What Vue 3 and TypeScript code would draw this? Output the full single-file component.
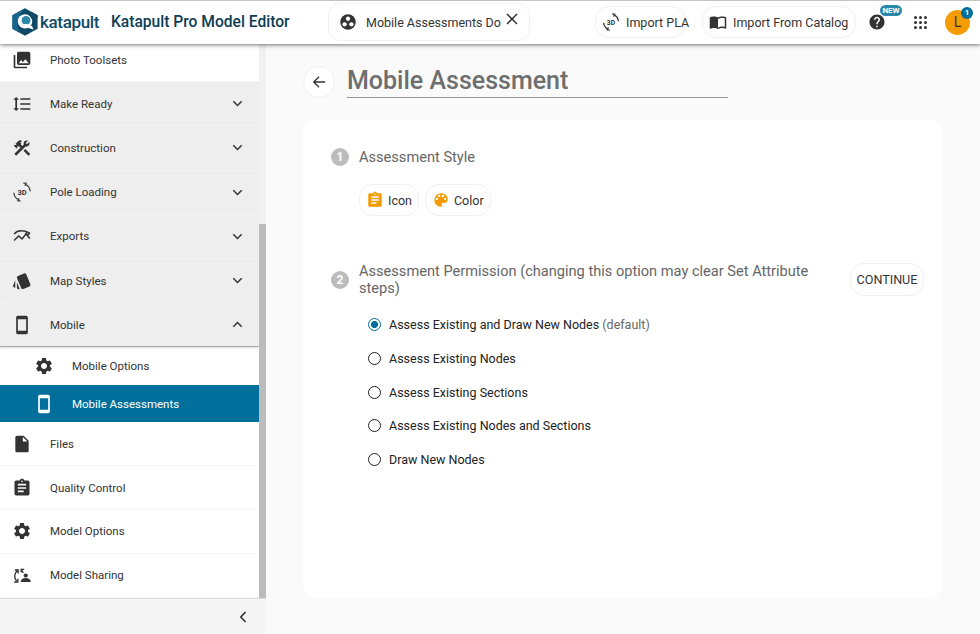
<script setup lang="ts">
import { ref } from 'vue';

interface NavItem {
  label: string;
  icon: string;
  shaded?: boolean;
  chevron?: 'down' | 'up';
  sub?: boolean;
  active?: boolean;
  short?: boolean;
}

const icons: Record<string, string> = {
  photos:
    'M22 16V4c0-1.1-.9-2-2-2H8c-1.1 0-2 .9-2 2v12c0 1.1.9 2 2 2h12c1.1 0 2-.9 2-2zm-11-4l2.03 2.71L16 11l4 5H8l3-4zM2 6v14c0 1.1.9 2 2 2h14v-2H4V6H2z',
  spacing:
    'M6 7h2.5L5 3.5 1.5 7H4v10H1.5L5 20.5 8.5 17H6V7zm4-2v2h12V5H10zm0 14h12v-2H10v2zm0-6h12v-2H10v2z',
  tools:
    'M13.78 15.3l6 6 2.11-2.16-6-6zM17.5 10c1.93 0 3.5-1.57 3.5-3.5 0-.58-.16-1.12-.41-1.6l-2.7 2.7-1.49-1.49 2.7-2.7c-.48-.25-1.02-.41-1.6-.41C15.57 3 14 4.57 14 6.5c0 .41.08.8.21 1.16l-1.85 1.85-1.78-1.78.71-.71-1.41-1.41L12 3.49c-1.17-1.17-3.07-1.17-4.24 0L4.22 7.03l1.41 1.41H2.81l-.71.71 3.54 3.54.71-.71V9.15l1.41 1.41.71-.71 1.78 1.78-7.41 7.41 2.12 2.12L16.34 10.21c.36.13.75.21 1.16.21z',
  style:
    'M2.53 19.65l1.34.56v-9.03l-2.43 5.86c-.41 1.02.08 2.19 1.09 2.61zm19.5-3.7L17.07 3.98c-.31-.75-1.04-1.21-1.81-1.23-.26 0-.53.04-.79.15L7.1 5.95c-.75.31-1.21 1.03-1.23 1.8-.01.27.04.54.15.8l4.96 11.97c.31.76 1.05 1.22 1.83 1.23.26 0 .52-.05.77-.15l7.36-3.05c1.02-.42 1.51-1.59 1.09-2.6zM5.88 19.75c0 1.1.9 2 2 2h1.45l-3.45-8.34v6.34z',
  phone:
    'M17 1.01L7 1c-1.1 0-2 .9-2 2v18c0 1.1.9 2 2 2h10c1.1 0 2-.9 2-2V3c0-1.1-.9-1.99-2-1.99zM17 19H7V5h10v14z',
  gear:
    'M19.14 12.94c.04-.3.06-.61.06-.94 0-.32-.02-.64-.07-.94l2.03-1.58c.18-.14.23-.41.12-.61l-1.92-3.32c-.12-.22-.37-.29-.59-.22l-2.39.96c-.5-.38-1.03-.7-1.62-.94l-.36-2.54c-.04-.24-.24-.41-.48-.41h-3.84c-.24 0-.43.17-.47.41l-.36 2.54c-.59.24-1.13.57-1.62.94l-2.39-.96c-.22-.08-.47 0-.59.22L2.74 8.87c-.12.21-.08.47.12.61l2.03 1.58c-.05.3-.09.63-.09.94s.02.64.07.94l-2.03 1.58c-.18.14-.23.41-.12.61l1.92 3.32c.12.22.37.29.59.22l2.39-.96c.5.38 1.03.7 1.62.94l.36 2.54c.05.24.24.41.48.41h3.84c.24 0 .44-.17.47-.41l.36-2.54c.59-.24 1.13-.56 1.62-.94l2.39.96c.22.08.47 0 .59-.22l1.92-3.32c.12-.22.07-.47-.12-.61l-2.01-1.58zM12 15.6c-1.98 0-3.6-1.62-3.6-3.6s1.62-3.6 3.6-3.6 3.6 1.62 3.6 3.6-1.62 3.6-3.6 3.6z',
  file: 'M6 2c-1.1 0-1.99.9-1.99 2L4 20c0 1.1.89 2 1.99 2H18c1.1 0 2-.9 2-2V8l-6-6H6zm7 7V3.5L18.5 9H13z',
  clipboard:
    'M19 3h-4.18C14.4 1.84 13.3 1 12 1c-1.3 0-2.4.84-2.82 2H5c-1.1 0-2 .9-2 2v14c0 1.1.9 2 2 2h14c1.1 0 2-.9 2-2V5c0-1.1-.9-2-2-2zm-7 0c.55 0 1 .45 1 1s-.45 1-1 1-1-.45-1-1 .45-1 1-1zm2 14H7v-2h7v2zm3-4H7v-2h10v2zm0-4H7V7h10v2z',
  palette:
    'M12 3a9 9 0 0 0 0 18c.83 0 1.5-.67 1.5-1.5 0-.39-.15-.74-.39-1.01-.23-.26-.38-.61-.38-.99 0-.83.67-1.5 1.5-1.5H16c2.76 0 5-2.24 5-5 0-4.42-4.03-8-9-8zm-5.5 9c-.83 0-1.5-.67-1.5-1.5S5.67 9 6.5 9 8 9.67 8 10.5 7.33 12 6.5 12zm3-4C8.67 8 8 7.33 8 6.5S8.67 5 9.5 5s1.5.67 1.5 1.5S10.33 8 9.5 8zm5 0c-.83 0-1.5-.67-1.5-1.5S13.67 5 14.5 5s1.5.67 1.5 1.5S15.33 8 14.5 8zm3 4c-.83 0-1.5-.67-1.5-1.5S16.67 9 17.5 9s1.5.67 1.5 1.5-.67 1.5-1.5 1.5z',
  help: 'M12 2C6.48 2 2 6.48 2 12s4.48 10 10 10 10-4.48 10-10S17.52 2 12 2zm1 17h-2v-2h2v2zm2.07-7.75l-.9.92C13.45 12.9 13 13.5 13 15h-2v-.5c0-1.1.45-2.1 1.17-2.83l1.24-1.26c.37-.36.59-.86.59-1.41 0-1.1-.9-2-2-2s-2 .9-2 2H8c0-2.21 1.79-4 4-4s4 1.79 4 4c0 .88-.36 1.68-.93 2.25z',
  book: 'M21 5c-1.11-.35-2.33-.5-3.5-.5-1.95 0-4.05.4-5.5 1.5-1.45-1.1-3.55-1.5-5.5-1.5S2.45 4.9 1 6v14.65c0 .25.25.5.5.5.1 0 .15-.05.25-.05C3.1 20.45 5.05 20 6.5 20c1.95 0 4.05.4 5.5 1.5 1.35-.85 3.8-1.5 5.5-1.5 1.65 0 3.35.3 4.75 1.05.1.05.15.05.25.05.25 0 .5-.25.5-.5V6c-.6-.45-1.25-.75-2-1zm0 13.5c-1.1-.35-2.3-.5-3.5-.5-1.7 0-4.15.65-5.5 1.5V8c1.35-.85 3.8-1.5 5.5-1.5 1.2 0 2.4.15 3.5.5v11.5z',
};

const navItems: NavItem[] = [
  { label: 'Photo Toolsets', icon: 'photos' },
  { label: 'Make Ready', icon: 'spacing', shaded: true, chevron: 'down' },
  { label: 'Construction', icon: 'tools', shaded: true, chevron: 'down' },
  { label: 'Pole Loading', icon: 'rotate3d', shaded: true, chevron: 'down' },
  { label: 'Exports', icon: 'exports', shaded: true, chevron: 'down' },
  { label: 'Map Styles', icon: 'style', shaded: true, chevron: 'down' },
  { label: 'Mobile', icon: 'phone', shaded: true, chevron: 'up' },
  { label: 'Mobile Options', icon: 'gear', sub: true },
  { label: 'Mobile Assessments', icon: 'phone', sub: true, active: true },
  { label: 'Files', icon: 'file', short: true },
  { label: 'Quality Control', icon: 'clipboard', short: true },
  { label: 'Model Options', icon: 'gear', short: true },
  { label: 'Model Sharing', icon: 'sharing', short: true },
];

const permissions = [
  'Assess Existing and Draw New Nodes',
  'Assess Existing Nodes',
  'Assess Existing Sections',
  'Assess Existing Nodes and Sections',
  'Draw New Nodes',
];

const selected = ref(0);
</script>

<template>
  <div class="app">
    <header class="topbar">
      <div class="brand">
        <svg class="logo" viewBox="0 0 26 28">
          <path d="M13 0.3 25.6 7.2V20.8L13 27.7 0.4 20.8V7.2Z" fill="#0e4a66" />
          <path d="M13 0.3 0.4 7.2V20.8L7 24.4 5 14 8 7Z" fill="#14688c" />
          <circle cx="13" cy="13.4" r="7.2" fill="#fff" />
          <circle cx="14" cy="12.4" r="4.4" fill="#2b88a8" />
          <path d="M8 17.6 21.6 21.6 20 18 13.5 15.8Z" fill="#fff" />
          <path d="M17.6 7.6 21 13 25.6 10V7.2L19 3.6Z" fill="#0e4a66" />
        </svg>
        <span class="wordmark">katapult</span>
      </div>
      <h1 class="app-title">Katapult Pro Model Editor</h1>

      <div class="tab-chip">
        <svg class="tab-icon" viewBox="0 0 20 20">
          <circle cx="10" cy="10" r="8.6" fill="#333" />
          <circle cx="10" cy="6.4" r="2.4" fill="#fff" />
          <circle cx="6.2" cy="12.6" r="2.4" fill="#fff" />
          <circle cx="13.8" cy="12.6" r="2.4" fill="#fff" />
        </svg>
        <span class="tab-text">Mobile Assessments Do</span>
        <svg class="tab-close" viewBox="0 0 12 12">
          <path d="M1 1 11 11M11 1 1 11" stroke="#222" stroke-width="1.3" fill="none" />
        </svg>
      </div>

      <button class="top-btn pla-btn">
        <svg class="top-btn-icon" viewBox="0 0 24 24">
          <path d="M2.2 13A10 10 0 0 0 8 21.4M8.6 19.4 7 22.4 10.5 22.8M21.8 11A10 10 0 0 0 16 2.6M15.4 4.6 17 1.6 13.5 1.2" fill="none" stroke="#333" stroke-width="1.7" />
          <text x="12" y="15.6" text-anchor="middle" class="svg-3d">3D</text>
        </svg>
        Import PLA
      </button>
      <button class="top-btn catalog-btn">
        <svg class="top-btn-icon" viewBox="0 0 24 24"><path :d="icons.book" fill="#333" /></svg>
        Import From Catalog
      </button>

      <div class="help">
        <svg viewBox="0 0 24 24" class="help-icon"><path :d="icons.help" fill="#333" /></svg>
        <span class="new-badge">NEW</span>
      </div>
      <div class="apps-grid">
        <i v-for="n in 9" :key="n"></i>
      </div>
      <div class="avatar">
        L
        <span class="avatar-badge">1</span>
      </div>
    </header>

    <div class="body-row">
      <aside class="sidebar">
        <div class="nav-scroll">
          <nav class="nav">
            <div
              v-for="item in navItems"
              :key="item.label"
              class="nav-row"
              :class="{ shaded: item.shaded, sub: item.sub, active: item.active, short: item.short, open: item.chevron === 'up' }"
            >
              <svg v-if="item.icon === 'rotate3d'" class="nav-icon" viewBox="0 0 24 24">
                <path d="M2.2 13A10 10 0 0 0 8 21.4M8.6 19.4 7 22.4 10.5 22.8M21.8 11A10 10 0 0 0 16 2.6M15.4 4.6 17 1.6 13.5 1.2" fill="none" stroke="#333" stroke-width="1.4" />
                <text x="12" y="15.6" text-anchor="middle" class="svg-3d">3D</text>
              </svg>
              <svg v-else-if="item.icon === 'exports'" class="nav-icon" viewBox="0 0 24 24">
                <path d="M2.5 9.5C6 5.5 13 4.5 21.5 8.5M2.5 17.5 8 12l4 3.5 6-7.5M16 8.5l5.5 6.5M21.5 8.5l-3.5 3" fill="none" stroke="#333" stroke-width="1.8" />
              </svg>
              <svg v-else-if="item.icon === 'sharing'" class="nav-icon" viewBox="0 0 24 24">
                <path d="M5.5 19C2.2 15.5 2.4 9.6 7 6.5M7.4 10.2V6H3.4M2.6 20.4H7V16.6M13.5 9.5 11 5.5M11 8.8V5.2H14.6" fill="none" stroke="#333" stroke-width="1.6" />
                <circle cx="16.5" cy="12.6" r="2.5" fill="#333" />
                <path d="M10.5 20.5c0-3.3 2.6-5 6-5s6 1.7 6 5Z" fill="#333" />
              </svg>
              <svg v-else class="nav-icon" viewBox="0 0 24 24"><path :d="icons[item.icon]" /></svg>
              <span class="nav-label">{{ item.label }}</span>
              <svg v-if="item.chevron" class="chevron" :class="{ up: item.chevron === 'up' }" viewBox="0 0 12 8">
                <path d="M1.2 1.4 6 6.2 10.8 1.4" fill="none" stroke="#333" stroke-width="1.7" />
              </svg>
            </div>
          </nav>
          <div class="scroll-track"><div class="scroll-thumb"></div></div>
        </div>
        <div class="collapse-bar">
          <svg class="collapse-icon" viewBox="0 0 8 12">
            <path d="M6.6 1 1.8 6 6.6 11" fill="none" stroke="#333" stroke-width="1.6" />
          </svg>
        </div>
      </aside>

      <main class="main">
        <div class="title-row">
          <button class="back-btn" aria-label="Back">
            <svg viewBox="0 0 16 16">
              <path d="M15 8H2M8 2 2 8l6 6" fill="none" stroke="#333" stroke-width="1.5" />
            </svg>
          </button>
          <div class="page-title">Mobile Assessment</div>
        </div>

        <section class="card">
          <div class="step-head first">
            <span class="step-num">1</span>
            <span class="step-title">Assessment Style</span>
          </div>
          <div class="chips">
            <button class="chip">
              <svg viewBox="0 0 24 24"><path :d="icons.clipboard" fill="#f59c00" /></svg>
              Icon
            </button>
            <button class="chip">
              <svg viewBox="0 0 24 24"><path :d="icons.palette" fill="#f59c00" /></svg>
              Color
            </button>
          </div>

          <div class="step-head second">
            <span class="step-num">2</span>
            <span class="step-title wrap">Assessment Permission (changing this option may clear Set Attribute steps)</span>
            <button class="continue-btn">CONTINUE</button>
          </div>
          <div class="radios">
            <label v-for="(option, i) in permissions" :key="option" class="radio-row" @click="selected = i">
              <span class="radio" :class="{ on: selected === i }"></span>
              <span>{{ option }}<span v-if="i === 0" class="muted"> (default)</span></span>
            </label>
          </div>
        </section>
      </main>
    </div>
  </div>
</template>

<style>
html,
body {
  margin: 0;
  height: 100%;
  overflow: hidden;
}
</style>

<style scoped>
.app {
  width: 980px;
  height: 634px;
  display: flex;
  flex-direction: column;
  overflow: hidden;
  font-family: Roboto, "Liberation Sans", sans-serif;
  color: #333;
  background: #fafafa;
}

.topbar {
  position: relative;
  z-index: 2;
  flex: 0 0 44px;
  box-sizing: border-box;
  display: flex;
  align-items: center;
  padding-bottom: 1px;
  background: #fff;
  border-top: 1px solid #c4c4c4;
  box-shadow: 0 1px 4px rgba(0, 0, 0, 0.55);
}

.brand {
  display: flex;
  align-items: center;
  margin-left: 12px;
  width: 99px;
}

.logo {
  width: 26px;
  height: 28px;
  flex: none;
}

.wordmark {
  margin-left: 2px;
  font-size: 17px;
  font-weight: 500;
  letter-spacing: -0.35px;
  color: #0e4a66;
}

.app-title {
  margin: 0;
  font-size: 15.6px;
  font-weight: 500;
  width: 217px;
  color: #0b3d55;
  white-space: nowrap;
}

.tab-chip {
  box-sizing: border-box;
  width: 202px;
  height: 38px;
  display: flex;
  align-items: center;
  padding-left: 10px;
  border: 1px solid #f1f1f1;
  border-radius: 12px;
  background: #fff;
}

.tab-icon {
  width: 18px;
  height: 18px;
  flex: none;
}

.tab-text {
  margin-left: 9px;
  font-size: 12.5px;
  color: #333;
  white-space: nowrap;
}

.tab-close {
  width: 12px;
  height: 12px;
  margin: -7px 0 0 5px;
}

.top-btn {
  box-sizing: border-box;
  height: 32px;
  display: flex;
  align-items: center;
  padding: 0 6px;
  background: #fff;
  border: 1px solid #f0f0f0;
  border-radius: 14px;
  font: inherit;
  font-size: 12.5px;
  color: #333;
  white-space: nowrap;
}

.pla-btn {
  margin-left: 65px;
  width: 91px;
}

.catalog-btn {
  margin-left: 16px;
  width: 154px;
}

.top-btn-icon {
  width: 18px;
  height: 18px;
  margin-right: 6px;
  flex: none;
}

.svg-3d {
  font-family: Roboto, sans-serif;
  font-size: 9px;
  font-weight: 700;
  fill: #333;
}

.help {
  position: relative;
  margin-left: 12px;
  width: 18px;
  height: 18px;
}

.help-icon {
  width: 18px;
  height: 18px;
  display: block;
}

.new-badge {
  position: absolute;
  left: 12px;
  top: -8px;
  height: 11px;
  width: 22px;
  border-radius: 6px;
  background: #2b88a8;
  color: #fff;
  font-size: 8px;
  font-weight: 700;
  line-height: 11px;
  text-align: center;
}

.apps-grid {
  margin-left: 28px;
  display: grid;
  grid-template-columns: repeat(3, 3px);
  gap: 2px;
}

.apps-grid i {
  width: 3px;
  height: 3px;
  border-radius: 50%;
  background: #333;
}

.avatar {
  position: relative;
  margin-left: 18px;
  width: 25px;
  height: 25px;
  border-radius: 50%;
  background: #f59c00;
  color: #333;
  font-size: 14px;
  line-height: 25px;
  text-align: center;
}

.avatar-badge {
  position: absolute;
  right: -3px;
  top: -3px;
  width: 12px;
  height: 12px;
  border-radius: 50%;
  background: #006f9b;
  color: #fff;
  font-size: 8px;
  font-weight: 700;
  line-height: 12px;
}

.body-row {
  flex: 1;
  min-height: 0;
  display: flex;
}

.sidebar {
  flex: 0 0 266px;
  display: flex;
  flex-direction: column;
  background: #f5f5f5;
}

.nav-scroll {
  flex: 1;
  min-height: 0;
  display: flex;
  overflow: hidden;
}

.nav {
  flex: 1;
  margin-top: -6px;
  background: #fff;
}

.nav-row {
  box-sizing: border-box;
  height: 44.2px;
  display: flex;
  align-items: center;
  padding: 0 16px 0 12px;
  border-bottom: 1px solid #f5f5f5;
  font-size: 11.5px;
  color: #333;
}

.nav-row.shaded {
  background: #eee;
}

.nav-row.open {
  border-bottom: 1px solid #aaa;
  box-shadow: 0 1px 2px rgba(0, 0, 0, 0.15);
}

.nav-row.short {
  height: 43.8px;
}

.nav-row.sub {
  height: 37.5px;
  padding-left: 34px;
  border-bottom: 0;
}

.nav-row.active {
  background: #006f9b;
  color: #fff;
}

.nav-row.active .nav-icon {
  fill: #fff;
}

.nav-icon {
  width: 20px;
  height: 20px;
  flex: none;
  fill: #333;
}

.nav-label {
  margin-left: 18px;
  flex: 1;
}

.chevron {
  width: 11px;
  height: 7px;
}

.chevron.up {
  transform: rotate(180deg);
}

.scroll-track {
  position: relative;
  flex: 0 0 7px;
  background: #f1f1f1;
}

.scroll-thumb {
  position: absolute;
  left: 0;
  right: 0;
  top: 180px;
  bottom: 0;
  background: #bcbcbc;
}

.collapse-bar {
  flex: 0 0 36px;
  display: flex;
  align-items: center;
  justify-content: flex-end;
  padding-right: 19px;
  border-top: 1px solid #ddd;
  box-sizing: border-box;
}

.collapse-icon {
  width: 8px;
  height: 12px;
}

.main {
  flex: 1;
  min-width: 0;
  padding: 22px 38px 37px 37px;
  display: flex;
  flex-direction: column;
}

.title-row {
  display: flex;
  align-items: center;
  height: 32px;
}

.back-btn {
  width: 32px;
  height: 32px;
  padding: 0;
  display: flex;
  align-items: center;
  justify-content: center;
  background: #fff;
  border: 1px solid #f0f0f0;
  border-radius: 50%;
}

.back-btn svg {
  width: 14px;
  height: 14px;
}

.page-title {
  box-sizing: border-box;
  margin-left: 12px;
  width: 381px;
  height: 32px;
  line-height: 30px;
  border-bottom: 1px solid #999;
  font-size: 25px;
  font-weight: 500;
  color: #6e6e6e;
}

.card {
  flex: 1;
  margin-top: 22px;
  padding: 28px 18px 0 28px;
  background: #fff;
  border-radius: 12px;
}

.step-head {
  display: flex;
  align-items: center;
}

.step-num {
  flex: none;
  width: 18px;
  height: 18px;
  margin-right: 10px;
  border-radius: 50%;
  background: #bdbdbd;
  color: #fff;
  font-size: 12px;
  font-weight: 700;
  line-height: 18px;
  text-align: center;
}

.step-title {
  font-size: 14.6px;
  line-height: 17px;
  color: #666;
}

.step-title.wrap {
  flex: 1;
  padding-right: 30px;
}

.chips {
  display: flex;
  gap: 6px;
  margin: 18px 0 0 28px;
}

.chip {
  box-sizing: border-box;
  height: 32px;
  display: flex;
  align-items: center;
  padding: 0 6px;
  background: #fff;
  border: 1px solid #f0f0f0;
  border-radius: 14px;
  font: inherit;
  font-size: 12.5px;
  color: #333;
}

.chip svg {
  width: 18px;
  height: 18px;
  margin-right: 4px;
}

.step-head.second {
  margin-top: 47px;
}

.continue-btn {
  box-sizing: border-box;
  flex: none;
  width: 74px;
  height: 33px;
  margin-bottom: 1px;
  padding: 0;
  background: #fff;
  border: 1px solid #f0f0f0;
  border-radius: 14px;
  font: inherit;
  font-size: 12.6px;
  color: #333;
}

.radios {
  margin: 11px 0 0 37px;
  display: flex;
  flex-direction: column;
}

.radio-row {
  height: 33.7px;
  display: flex;
  align-items: center;
  gap: 8px;
  font-size: 12.5px;
  color: #222;
}

.radio {
  box-sizing: border-box;
  width: 13px;
  height: 13px;
  border: 1.5px solid #222;
  border-radius: 50%;
}

.radio.on {
  border-color: #006f9b;
  background: radial-gradient(circle, #006f9b 0 3.3px, #fff 3.8px);
}

.muted {
  color: #666;
}
</style>
